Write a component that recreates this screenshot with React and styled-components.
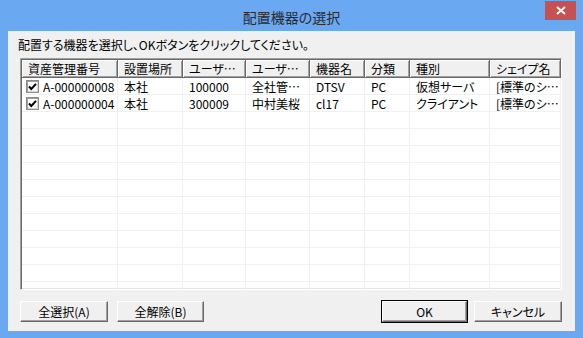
import React from 'react';
import styled, { createGlobalStyle } from 'styled-components';

const GlobalStyle = createGlobalStyle`
  body {
    margin: 0;
    font-family: "Noto Sans CJK JP", "Liberation Sans", sans-serif;
  }
`;

const columns = [
  { title: '資産管理番号', width: 96 },
  { title: '設置場所', width: 65 },
  { title: 'ユーザ…', width: 63 },
  { title: 'ユーザ…', width: 64 },
  { title: '機器名', width: 55 },
  { title: '分類', width: 45 },
  { title: '種別', width: 80 },
  { title: 'シェイプ名', width: 71 },
];

const rows = [
  ['A-000000008', '本社', '100000', '全社管…', 'DTSV', 'PC', '仮想サーバ', '[標準のシ…'],
  ['A-000000004', '本社', '300009', '中村美桜', 'cl17', 'PC', 'クライアント', '[標準のシ…'],
];

const EMPTY_ROWS = 11;
const gridTemplate = columns.map((c) => `${c.width}px`).join(' ');

export default function App() {
  return (
    <>
      <GlobalStyle />
      <Window>
        <TitleBar>
          <Title>配置機器の選択</Title>
          <CloseButton aria-label='閉じる'>
            <svg width='10' height='9' viewBox='0 0 10 9'>
              <path d='M1 1 L9 8 M9 1 L1 8' stroke='#fff' strokeWidth='2' />
            </svg>
          </CloseButton>
        </TitleBar>
        <Client>
          <Prompt>配置する機器を選択し、OKボタンをクリックしてください。</Prompt>
          <ListView>
            <HeaderRow $template={gridTemplate}>
              {columns.map((c, i) => (
                <HeaderCell key={i}>{c.title}</HeaderCell>
              ))}
            </HeaderRow>
            {rows.map((row, r) => (
              <Row key={r} $template={gridTemplate}>
                {row.map((value, i) => (
                  <Cell key={i}>
                    {i === 0 && (
                      <CheckBox>
                        <svg width='11' height='11' viewBox='0 0 11 11'>
                          <path d='M2 5.5 L4.3 8 L9 2.8' fill='none' stroke='#000' strokeWidth='2' />
                        </svg>
                      </CheckBox>
                    )}
                    {value}
                  </Cell>
                ))}
              </Row>
            ))}
            {Array.from({ length: EMPTY_ROWS }).map((_, r) => (
              <Row key={`e${r}`} $template={gridTemplate}>
                {columns.map((c, i) => (
                  <Cell key={i} />
                ))}
              </Row>
            ))}
          </ListView>
          <ButtonBar>
            <ButtonGroup $gap={9}>
              <PushButton $width={88}>全選択(A)</PushButton>
              <PushButton $width={87}>全解除(B)</PushButton>
            </ButtonGroup>
            <ButtonGroup $gap={7}>
              <PushButton $width={85} $default>OK</PushButton>
              <PushButton $width={88}>キャンセル</PushButton>
            </ButtonGroup>
          </ButtonBar>
        </Client>
      </Window>
    </>
  );
}

const Window = styled.div`
  width: 583px;
  height: 338px;
  box-sizing: border-box;
  background: #6ba8f2;
  padding: 0 8px 7px;
  display: flex;
  flex-direction: column;
`;

const TitleBar = styled.div`
  height: 31px;
  flex: none;
  display: grid;
  grid-template-columns: 1fr auto 1fr;
`;

const Title = styled.div`
  grid-column: 2;
  align-self: center;
  margin-top: 2px;
  font-size: 14px;
  color: #2b2b2b;
  font-feature-settings: 'palt';
`;

const CloseButton = styled.div`
  grid-column: 3;
  justify-self: end;
  align-self: start;
  margin-top: 1px;
  margin-right: -1px;
  width: 31px;
  height: 19px;
  background: #c75050;
  display: flex;
  align-items: center;
  justify-content: center;
`;

const Client = styled.div`
  flex: 1;
  background: #f0f0f0;
  padding: 7px 13px 9px 12px;
  display: flex;
  flex-direction: column;
`;

const Prompt = styled.div`
  margin-left: -2px;
  height: 14px;
  line-height: 14px;
  font-size: 12px;
  color: #000;
  font-feature-settings: 'palt';
  margin-bottom: 6px;
  white-space: nowrap;
`;

const ListView = styled.div`
  height: 232px;
  flex: none;
  box-sizing: border-box;
  background: #fff;
  border-top: 1px solid #a0a0a0;
  border-left: 1px solid #a0a0a0;
  border-right: 1px solid #fff;
  border-bottom: 1px solid #fff;
  box-shadow: inset 1px 1px 0 #696969, inset -1px -1px 0 #e3e3e3;
  padding: 1px;
  overflow: hidden;
`;

const HeaderRow = styled.div`
  display: grid;
  grid-template-columns: ${(p) => p.$template};
  height: 18px;
`;

const HeaderCell = styled.div`
  background: #f0f0f0;
  box-sizing: border-box;
  border-right: 1px solid #696969;
  border-bottom: 1px solid #696969;
  box-shadow: inset 1px 1px 0 #fff, inset -1px -1px 0 #a0a0a0;
  padding-left: 6px;
  font-size: 12px;
  line-height: 17px;
  color: #000;
  white-space: nowrap;
  overflow: hidden;
  font-feature-settings: 'palt';
`;

const Row = styled.div`
  display: grid;
  grid-template-columns: ${(p) => p.$template};
  height: 17px;
`;

const Cell = styled.div`
  box-sizing: border-box;
  border-right: 1px solid #f0f0f0;
  border-bottom: 1px solid #f0f0f0;
  padding-left: 6px;
  display: flex;
  align-items: center;
  gap: 4px;
  font-size: 12px;
  color: #000;
  white-space: nowrap;
  overflow: hidden;
  font-feature-settings: 'palt';

  &:first-child {
    padding-left: 4px;
  }
`;

const CheckBox = styled.span`
  width: 13px;
  height: 13px;
  flex: none;
  box-sizing: border-box;
  background: #fff;
  border: 1px solid #8a8a8a;
  box-shadow: inset 1px 1px 0 #a0a0a0, inset -1px -1px 0 #d8d8d8;
  display: flex;
  align-items: center;
  justify-content: center;
`;

const ButtonBar = styled.div`
  margin-top: 11px;
  display: flex;
  justify-content: space-between;
`;

const ButtonGroup = styled.div`
  display: flex;
  gap: ${(p) => p.$gap}px;
`;

const PushButton = styled.div`
  width: ${(p) => p.$width}px;
  height: 21px;
  box-sizing: border-box;
  background: #f0f0f0;
  border-top: 1px solid #fff;
  border-left: 1px solid #fff;
  border-right: 1px solid #696969;
  border-bottom: 1px solid #696969;
  box-shadow: inset -1px -1px 0 #a0a0a0;
  outline: ${(p) => (p.$default ? '1px solid #000' : 'none')};
  font-size: 12px;
  color: #000;
  display: flex;
  align-items: center;
  justify-content: center;
  font-feature-settings: 'palt';
`;
